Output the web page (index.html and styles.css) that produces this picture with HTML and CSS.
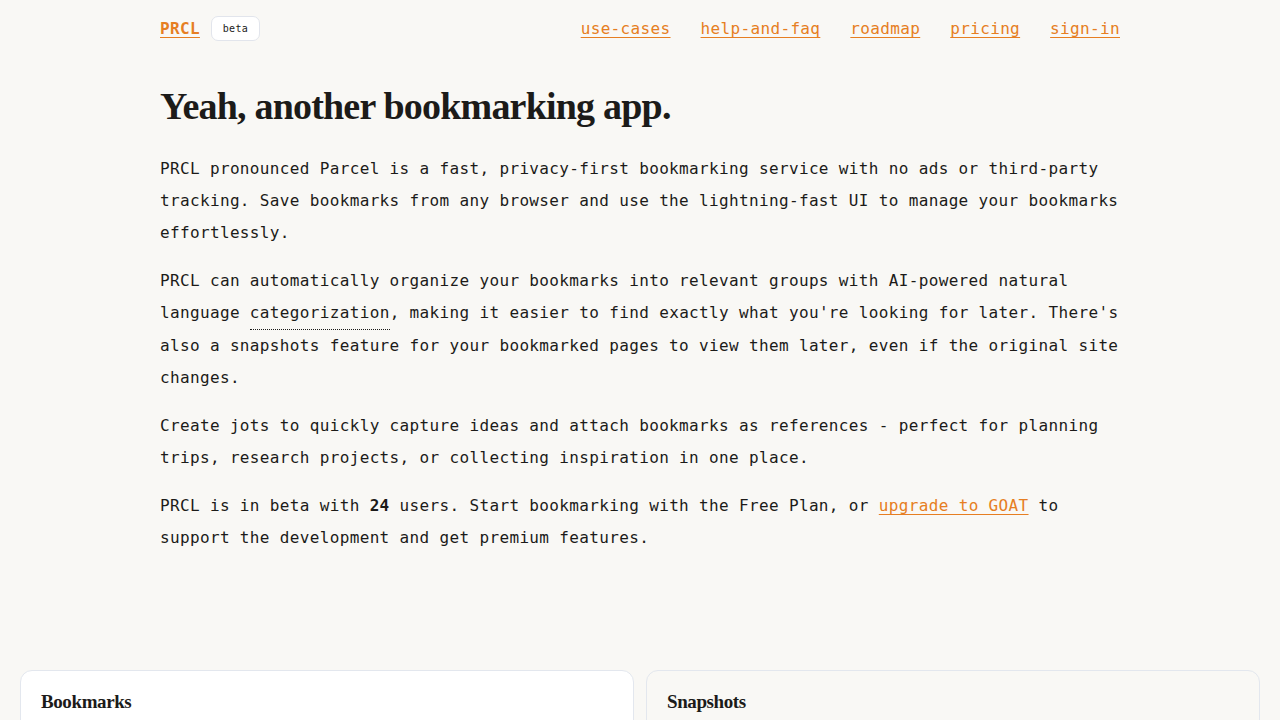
FILE: index.html
```html
<!DOCTYPE html>
<html lang="en">
<head>
<meta charset="utf-8">
<title>PRCL</title>
<link rel="stylesheet" href="styles.css">
</head>
<body>
<div class="container">
  <header class="nav">
    <div class="brand">
      <a class="logo" href="#">PRCL</a>
      <span class="badge">beta</span>
    </div>
    <nav class="links">
      <a href="#">use-cases</a>
      <a href="#">help-and-faq</a>
      <a href="#">roadmap</a>
      <a href="#">pricing</a>
      <a href="#">sign-in</a>
    </nav>
  </header>
  <main class="intro">
    <h1>Yeah, another bookmarking app.</h1>
    <p>PRCL pronounced Parcel is a fast, privacy-first bookmarking service with no ads or third-party tracking. Save bookmarks from any browser and use the lightning-fast UI to manage your bookmarks effortlessly.</p>
    <p>PRCL can automatically organize your bookmarks into relevant groups with AI-powered natural language <span class="abbr">categorization</span>, making it easier to find exactly what you're looking for later. There's also a snapshots feature for your bookmarked pages to view them later, even if the original site changes.</p>
    <p>Create jots to quickly capture ideas and attach bookmarks as references - perfect for planning trips, research projects, or collecting inspiration in one place.</p>
    <p>PRCL is in beta with <strong>24</strong> users. Start bookmarking with the Free Plan, or <a href="#">upgrade to GOAT</a> to support the development and get premium features.</p>
  </main>
</div>
<section class="cards">
  <div class="card card-white"><h2>Bookmarks</h2></div>
  <div class="card card-soft"><h2>Snapshots</h2></div>
</section>
</body>
</html>
```
FILE: styles.css
```css
* { box-sizing: border-box; }
html, body { margin: 0; padding: 0; }
body {
  background: #f9f8f5;
  color: #1c1b19;
  font-family: "DejaVu Sans Mono", "Liberation Mono", monospace;
  font-size: 16px;
  letter-spacing: 0.35px;
}
a { color: #e67e22; text-decoration: underline; text-underline-offset: 3px; }
.container { width: 960px; margin: 0 auto; }
.nav {
  display: flex;
  justify-content: space-between;
  align-items: center;
  height: 57px;
}
.brand { display: flex; align-items: center; gap: 11px; }
.logo { font-weight: bold; }
.badge {
  display: inline-flex;
  align-items: center;
  justify-content: center;
  width: 49px;
  height: 25px;
  background: #ffffff;
  border: 1px solid #e2e5ec;
  border-radius: 7px;
  font-size: 10px;
  letter-spacing: 0.3px;
}
.links { display: flex; gap: 30px; }
.intro h1 {
  font-family: "Liberation Serif", "DejaVu Serif", serif;
  font-weight: bold;
  font-size: 38px;
  letter-spacing: -0.8px;
  margin: 24px 0 22px;
  line-height: 50px;
}
.intro p { margin: 0 0 16px; line-height: 32px; }
.abbr { border-bottom: 1px dotted #1c1b19; display: inline-block; line-height: 32px; }
strong { font-weight: bold; }
.cards {
  display: grid;
  grid-template-columns: 1fr 1fr;
  gap: 12px;
  padding: 0 20px;
  margin-top: 116px;
}
.card {
  border: 1px solid #e3e7ee;
  border-radius: 12px;
  padding: 20px 20px;
  height: 200px;
}
.card-white { background: #ffffff; }
.card-soft { background: #f9f8f5; }
.card h2 {
  margin: 0;
  font-family: "Liberation Serif", "DejaVu Serif", serif;
  font-weight: bold;
  font-size: 19px;
  letter-spacing: -0.4px;
}
```
